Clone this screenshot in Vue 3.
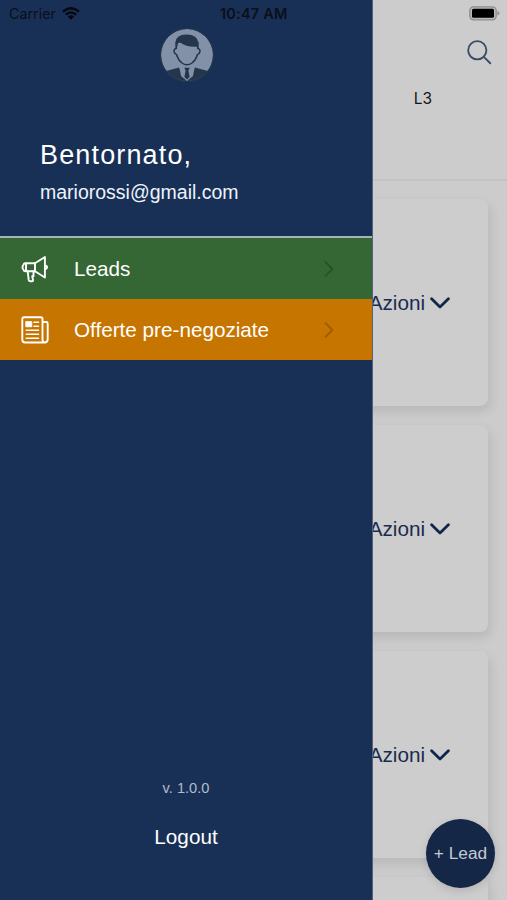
<script setup>
const entries = [
  { label: 'Leads', tone: 'green', icon: 'megaphone' },
  { label: 'Offerte pre-negoziate', tone: 'orange', icon: 'news' },
]
const cards = [
  { id: 1, action: 'Azioni' },
  { id: 2, action: 'Azioni' },
  { id: 3, action: 'Azioni' },
  { id: 4, action: '' },
]
</script>

<template>
  <div class="screen">
    <main class="page">
      <header class="head">
        <svg class="search" viewBox="0 0 26 26"><circle cx="10.7" cy="10.7" r="9.5" /><path d="M17.5 17.5 24.2 24.2" /></svg>
        <span class="level">L3</span>
      </header>
      <section class="list">
        <article v-for="c in cards" :key="c.id" class="card">
          <template v-if="c.action">
            <span class="action">{{ c.action }}</span>
            <svg class="down" viewBox="0 0 20 12"><path d="M1.600 1.800 10 9.900 18.400 1.800" /></svg>
          </template>
        </article>
      </section>
    </main>

    <button class="fab">+ Lead</button>

    <aside class="drawer">
      <div class="profile">
        <svg class="avatar" viewBox="0 0 56 56">
          <defs><clipPath id="disc"><circle cx="28" cy="28" r="26" /></clipPath></defs>
          <circle cx="28" cy="28" r="27.2" fill="#20364f" />
          <g clip-path="url(#disc)">
            <circle cx="28" cy="28" r="26" fill="#8291a8" />
            <path d="M0 56V46L9 43.500 20 40.500 28 54 36 40.500 47 43.500 56 46V56Z" fill="#23364c" />
            <path d="M20.500 41 24 37H32L35.500 41 34 49 28 54 22 49Z" fill="#8291a8" />
            <path d="M17.300 21.500Q14.400 22 15.200 25Q15.600 27.300 17.500 27.500Q19 33 23 36Q28 39.500 33 36Q37 33 38.500 27.500Q40.400 27.300 40.800 25Q41.600 22 38.700 21.500V15H17.300Z" fill="#8291a8" stroke="#23364c" stroke-width="1.500" />
            <path d="M16.600 22.500V15Q17.300 7.600 27 7.500Q38.500 7.200 39.400 16V22.500L38 19.800Q26.500 20.500 20.200 14.500Q18.300 17 18.200 20Z" fill="#23364c" />
            <path d="M25.300 40.800H30.700L29.400 43.800 30.600 50 28 52.500 25.400 50 26.600 43.800Z" fill="#23364c" />
          </g>
        </svg>
        <h1>Bentornato,</h1>
        <p>mariorossi@gmail.com</p>
      </div>
      <nav>
        <a v-for="e in entries" :key="e.label" class="entry" :class="e.tone">
          <svg v-if="e.icon === 'megaphone'" class="icon" viewBox="0 0 28 28">
            <path d="M4.200 8.200H14L23.900 2V22.500L14 16.200H4.200Q2.600 16.200 2.400 14.500L1.600 13.500V11L2.400 10Q2.600 8.200 4.200 8.200Z" />
            <path d="M5 8.500V16M14 8.200V16.200M24.500 10.500Q26.100 11 26.100 12.300T24.500 14.100M6.700 16.400 7.700 24.900Q7.900 26.200 9.200 26.200H11Q12.200 26.200 12 24.900L11.200 21.200H12.500V16.400" />
          </svg>
          <svg v-else class="icon" viewBox="0 0 28 28">
            <path d="M21.500 24V3Q21.500 1.300 19.800 1.300H3Q1.300 1.300 1.300 3V23.500Q1.300 26.500 4 26.500H23.700Q26.700 26.500 26.700 23.300V7.500Q26.700 6 25.200 6H21.500M21.500 23.500Q21.500 26.500 23.700 26.500" />
            <path class="thin" d="M13 6.300H17.500M13 10.200H17.500M5.300 14.200H17.500M5.300 18.200H17.500M5.300 22.200H17.500" />
            <rect class="photo" x="5" y="5.600" width="5.800" height="5.200" />
          </svg>
          <span>{{ e.label }}</span>
          <svg class="chevron" viewBox="0 0 10 16"><path d="M1.500 1.200 8.300 8 1.500 14.800" /></svg>
        </a>
      </nav>
      <footer>
        <small>v. 1.0.0</small>
        <span>Logout</span>
      </footer>
    </aside>

    <div class="status">
      <span class="carrier">Carrier</span>
      <svg class="wifi" viewBox="0 0 18 13">
        <path d="M1 4.700Q9-2.300 17 4.700M3.800 7.700Q9 3.200 14.200 7.700" />
        <path class="dot" d="M5.800 9.500Q9 7 12.200 9.500L9 12.800Z" />
      </svg>
      <time>10:47 AM</time>
      <svg class="battery" viewBox="0 0 31 15">
        <rect x=".8" y=".8" width="26.400" height="13" rx="3.800" fill="#b9b9b9" stroke="#8d8d8d" stroke-width="1.300" />
        <rect x="3" y="2.800" width="22" height="9" rx="1.500" fill="#000" />
        <path d="M28.500 5Q30.300 5.500 30.300 7.300T28.500 9.600Z" fill="#8d8d8d" />
      </svg>
    </div>
  </div>
</template>

<style>
body { margin: 0; background: #ccc; }
</style>

<style scoped>
.screen {
  position: relative;
  width: 507px;
  height: 900px;
  overflow: hidden;
  background: #ccc;
  font-family: "Liberation Sans", Arial, sans-serif;
  color: #fff;
}
svg { display: block; flex: none; fill: none; stroke-linecap: round; stroke-linejoin: round; }
.head {
  box-sizing: border-box;
  height: 181px;
  padding: 40px 15px 0 0;
  border-bottom: 2px solid #c3c3c3;
  display: flex;
  flex-direction: column;
  align-items: flex-end;
}
.search { width: 25px; height: 25px; stroke: #394b68; stroke-width: 1.900; }
.level {
  margin: 24px 60px 0 0;
  font: 15.500px/20px Inter, sans-serif;
  color: #151515;
}
.list { display: flex; flex-direction: column; gap: 19px; padding: 18px 19px 0; }
.card {
  box-sizing: border-box;
  flex: none;
  height: 207px;
  padding-right: 38px;
  border-radius: 8px;
  background: #cdcdcd;
  box-shadow: 2px 5px 12px rgba(0, 0, 0, .11);
  display: flex;
  align-items: center;
  justify-content: flex-end;
  gap: 5px;
}
.action { font-size: 20.700px; line-height: 24px; color: #1a2b4f; }
.down { width: 20px; height: 12px; stroke: #10264a; stroke-width: 2.800; }
.fab {
  position: absolute;
  left: 426px;
  top: 819px;
  width: 69px;
  height: 69px;
  padding: 0;
  border: 0;
  border-radius: 50%;
  background: #142747;
  color: #c4cad2;
  font: 17.300px "Liberation Sans", Arial, sans-serif;
  white-space: nowrap;
  box-shadow: 0 3px 8px rgba(0, 0, 0, .12);
}
.drawer {
  position: absolute;
  inset: 0 auto 0 0;
  box-sizing: border-box;
  width: 373px;
  border-right: 1px solid #52617c;
  background: #193056;
  display: flex;
  flex-direction: column;
}
.profile {
  box-sizing: border-box;
  height: 238px;
  padding: 27px 40px 0;
  border-bottom: 2px solid #a3b5b6;
}
.avatar { width: 56px; height: 56px; margin: 0 auto; position: relative; left: .5px; }
h1 { margin: 56px 0 0; font-size: 27px; line-height: 32px; font-weight: 400; letter-spacing: 1.150px; white-space: nowrap; }
p { margin: 9px 0 0; font-size: 19.500px; line-height: 24px; color: #edf3fb; }
.entry { height: 61px; display: flex; align-items: center; padding: 0 38px 0 21px; font-size: 20.700px; }
.green { background: #346734; }
.orange { background: #c57500; }
.icon { width: 28px; height: 28px; margin-right: 25px; stroke: #fff; stroke-width: 1.900; }
.thin { stroke-width: 1.600; }
.photo { fill: #fff; stroke-width: .8; }
.chevron { width: 10px; height: 16px; margin-left: auto; stroke-width: 1.900; }
.green .chevron { stroke: #275327; }
.orange .chevron { stroke: #9f5d00; }
footer { margin-top: auto; padding-bottom: 51px; display: flex; flex-direction: column; align-items: center; }
small { font-size: 14.600px; line-height: 18px; color: #b1bccc; }
footer span { margin-top: 28px; font-size: 20.700px; line-height: 24px; }
.status {
  position: absolute;
  inset: 0 0 auto;
  height: 27px;
  padding: 0 7px 0 9px;
  display: flex;
  align-items: center;
  font: 14.300px/27px Inter, sans-serif;
  color: #0a0f18;
}
.carrier { width: 47px; white-space: nowrap; }
.wifi { width: 18px; height: 13px; margin-left: 6px; stroke: #05080e; stroke-width: 2.400; stroke-linecap: butt; }
.wifi .dot { fill: #05080e; stroke: none; }
time { margin-left: 140px; font-size: 14.500px; font-weight: 600; letter-spacing: .2px; }
.battery { width: 31px; height: 15px; margin-left: auto; }
</style>
